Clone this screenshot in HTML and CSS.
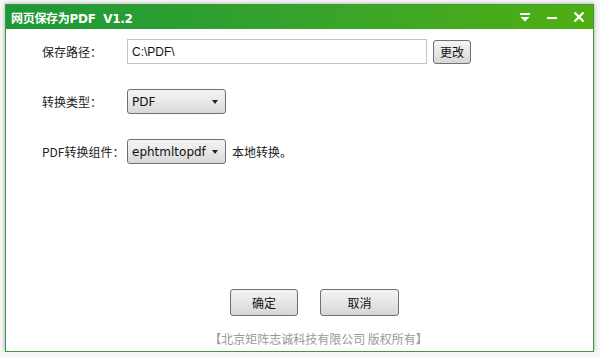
FILE: index.html
```html
<!DOCTYPE html>
<html lang="zh-CN">

<head>
    <meta charset="UTF-8">
    <title>网页保存为PDF V1.2</title>
    <link rel="stylesheet" href="styles.css">
</head>

<body>

    <div class="window">
        <div class="titlebar">
            <span class="title">网页保存为PDF&nbsp;&nbsp;V1.2</span>
            <div class="controls">
                <svg class="ctl" width="12" height="10" viewBox="0 0 12 10">
                    <rect x="1" y="1" width="10" height="2" fill="#fff"/>
                    <polygon points="1.5,5 10.5,5 6,9.5" fill="#fff"/>
                </svg>
                <svg class="ctl" width="12" height="10" viewBox="0 0 12 10">
                    <rect x="1" y="5" width="10" height="2" fill="#fff"/>
                </svg>
                <svg class="ctl" width="12" height="10" viewBox="0 0 12 10">
                    <path d="M1.5 0.5 L10.5 9.5 M10.5 0.5 L1.5 9.5" stroke="#fff" stroke-width="2.2"/>
                </svg>
            </div>
        </div>

        <div class="content">
            <div class="row">
                <label>保存路径：</label>
                <input type="text" class="path" value="C:\PDF\">
                <button class="btn small">更改</button>
            </div>
            <div class="row">
                <label>转换类型：</label>
                <div class="select"><span>PDF</span><span class="arrow"></span></div>
            </div>
            <div class="row">
                <label>PDF转换组件：</label>
                <div class="select"><span>ephtmltopdf</span><span class="arrow"></span></div>
                <span class="note">本地转换。</span>
            </div>
        </div>

        <div class="actions">
            <button class="btn ok">确定</button>
            <button class="btn cancel">取消</button>
        </div>
        <div class="footer">【北京矩阵志诚科技有限公司 版权所有】</div>
    </div>

</body>

</html>
```

FILE: styles.css
```css
body {
    margin: 0;
    background-color: #f7f7f7;
    font-family: "Noto Sans CJK SC", "Noto Sans", sans-serif;
    font-size: 12px;
    color: #222;
}

.window {
    margin: 4px 0 0 5px;
    width: 587px;
    height: 346px;
    background-color: #fff;
    border: 1px solid #3c9a3a;
    box-shadow: 0 0 4px rgba(0, 0, 0, 0.35);
    display: flex;
    flex-direction: column;
}

.titlebar {
    height: 24px;
    background: linear-gradient(to right, #1d9838, #36a32c 50%, #4fae12);
    display: flex;
    align-items: center;
    justify-content: space-between;
    padding: 0 8px 0 5px;
    color: #fff;
}

.title {
    font-family: "DejaVu Sans", "Noto Sans CJK SC", sans-serif;
    font-size: 12px;
    font-weight: bold;
    letter-spacing: -0.3px;
}

.controls {
    display: flex;
    gap: 15px;
    align-items: center;
}

.content {
    padding: 10px 0 0 36px;
    display: flex;
    flex-direction: column;
    gap: 25px;
}

.row {
    display: flex;
    align-items: center;
    height: 25px;
}

.row label {
    width: 85px;
    color: #222;
}

.path {
    width: 290px;
    height: 23px;
    padding: 0 4px;
    margin: 0;
    border: 1px solid #c4c4c4;
    font-family: "Liberation Sans", sans-serif;
    font-size: 12px;
    color: #111;
    outline: none;
}

.btn {
    font-family: "Noto Sans CJK SC", sans-serif;
    font-size: 12px;
    color: #111;
    border: 1px solid #707070;
    border-radius: 3px;
    background: linear-gradient(to bottom, #f4f4f4, #e6e6e6 50%, #d6d6d6);
    padding: 0;
    cursor: pointer;
}

.btn.small {
    margin-left: 6px;
    width: 38px;
    height: 24px;
}

.select {
    box-sizing: border-box;
    width: 99px;
    height: 25px;
    border: 1px solid #707070;
    border-radius: 3px;
    background: linear-gradient(to bottom, #f4f4f4, #e8e8e8 50%, #d8d8d8);
    display: flex;
    align-items: center;
    justify-content: space-between;
    padding: 0 7px 0 4px;
    font-family: "DejaVu Sans", sans-serif;
    font-size: 12px;
    color: #111;
}

.arrow {
    width: 0;
    height: 0;
    border-left: 3px solid transparent;
    border-right: 3px solid transparent;
    border-top: 4px solid #222;
}

.note {
    margin-left: 6px;
}

.actions {
    margin-top: auto;
    display: flex;
    justify-content: center;
    gap: 22px;
    padding-left: 30px;
}

.ok {
    width: 68px;
    height: 27px;
}

.cancel {
    width: 79px;
    height: 27px;
}

.footer {
    text-align: center;
    padding: 14px 0 4px 38px;
    color: #999;
    font-size: 12px;
}
```
